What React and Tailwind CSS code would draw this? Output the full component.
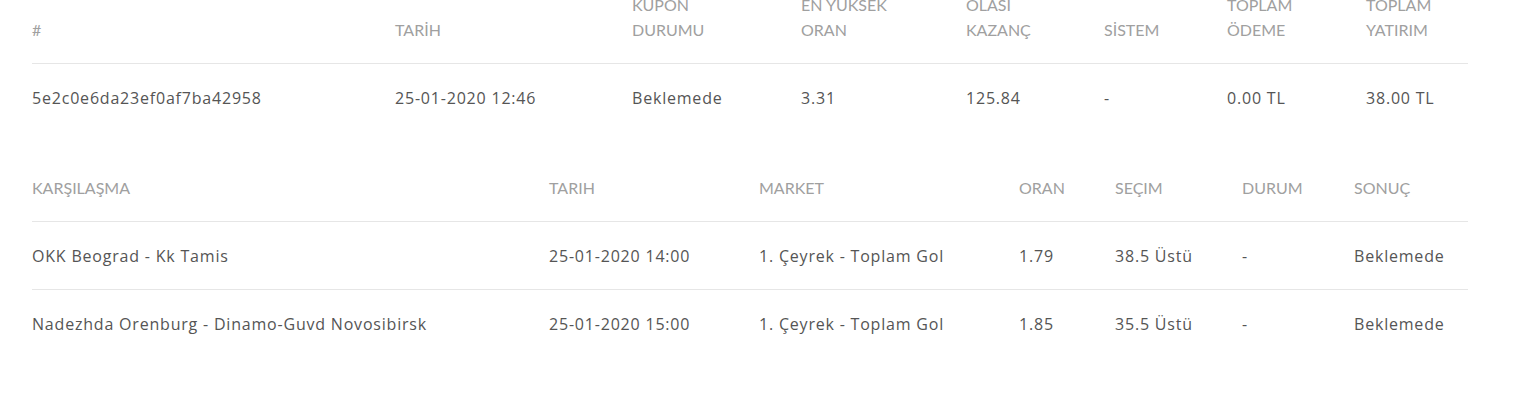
import React from 'react';

const couponCols = [
  { label: ['#'], w: 'w-[363px]' },
  { label: ['TARİH'], w: 'w-[237px]' },
  { label: ['KUPON', 'DURUMU'], w: 'w-[169px]' },
  { label: ['EN YÜKSEK', 'ORAN'], w: 'w-[165px]' },
  { label: ['OLASI', 'KAZANÇ'], w: 'w-[138px]' },
  { label: ['SİSTEM'], w: 'w-[123px]' },
  { label: ['TOPLAM', 'ÖDEME'], w: 'w-[139px]' },
  { label: ['TOPLAM', 'YATIRIM'], w: 'w-[102px]' },
];

const couponRow = ['5e2c0e6da23ef0af7ba42958', '25-01-2020 12:46', 'Beklemede', '3.31', '125.84', '-', '0.00 TL', '38.00 TL'];

const matchCols = [
  { label: 'KARŞILAŞMA', w: 'w-[517px]' },
  { label: 'TARIH', w: 'w-[210px]' },
  { label: 'MARKET', w: 'w-[260px]' },
  { label: 'ORAN', w: 'w-[96px]' },
  { label: 'SEÇIM', w: 'w-[127px]' },
  { label: 'DURUM', w: 'w-[112px]' },
  { label: 'SONUÇ', w: 'w-[114px]' },
];

const matches = [
  ['OKK Beograd - Kk Tamis', '25-01-2020 14:00', '1. Çeyrek - Toplam Gol', '1.79', '38.5 Üstü', '-', 'Beklemede'],
  ['Nadezhda Orenburg - Dinamo-Guvd Novosibirsk', '25-01-2020 15:00', '1. Çeyrek - Toplam Gol', '1.85', '35.5 Üstü', '-', 'Beklemede'],
];

export default function App() {
  return (
    <div className="min-h-[412px] bg-white overflow-hidden font-['Lato',sans-serif] text-[16px] leading-[25px]">
      <div className="pl-8 -mt-[29px]">
        <table className="table-fixed border-collapse w-[1436px]">
          <thead>
            <tr className="border-b border-[#e6e6e6]">
              {couponCols.map((c, i) => (
                <th key={i} className={`${c.w} text-left font-normal text-[#a0a0a0] align-bottom pt-[21px] pb-[21px]`}>
                  {c.label.map((l, j) => (
                    <div key={j}>{l}</div>
                  ))}
                </th>
              ))}
            </tr>
          </thead>
          <tbody>
            <tr>
              {couponRow.map((v, i) => (
                <td key={i} className="font-['Open_Sans',sans-serif] tracking-[0.8px] whitespace-nowrap text-[#555555] pt-[22px] pb-[20px]">{v}</td>
              ))}
            </tr>
          </tbody>
        </table>

        <table className="table-fixed border-collapse w-[1436px] mt-[23px]">
          <thead>
            <tr className="border-b border-[#e6e6e6]">
              {matchCols.map((c, i) => (
                <th key={i} className={`${c.w} text-left font-normal text-[#a0a0a0] py-[21px]`}>{c.label}</th>
              ))}
            </tr>
          </thead>
          <tbody>
            {matches.map((row, r) => (
              <tr key={r} className={r === 0 ? 'border-b border-[#e6e6e6]' : ''}>
                {row.map((v, i) => (
                  <td key={i} className="font-['Open_Sans',sans-serif] tracking-[0.8px] whitespace-nowrap text-[#555555] pt-[22px] pb-[20px]">{v}</td>
                ))}
              </tr>
            ))}
          </tbody>
        </table>
      </div>
    </div>
  );
}
